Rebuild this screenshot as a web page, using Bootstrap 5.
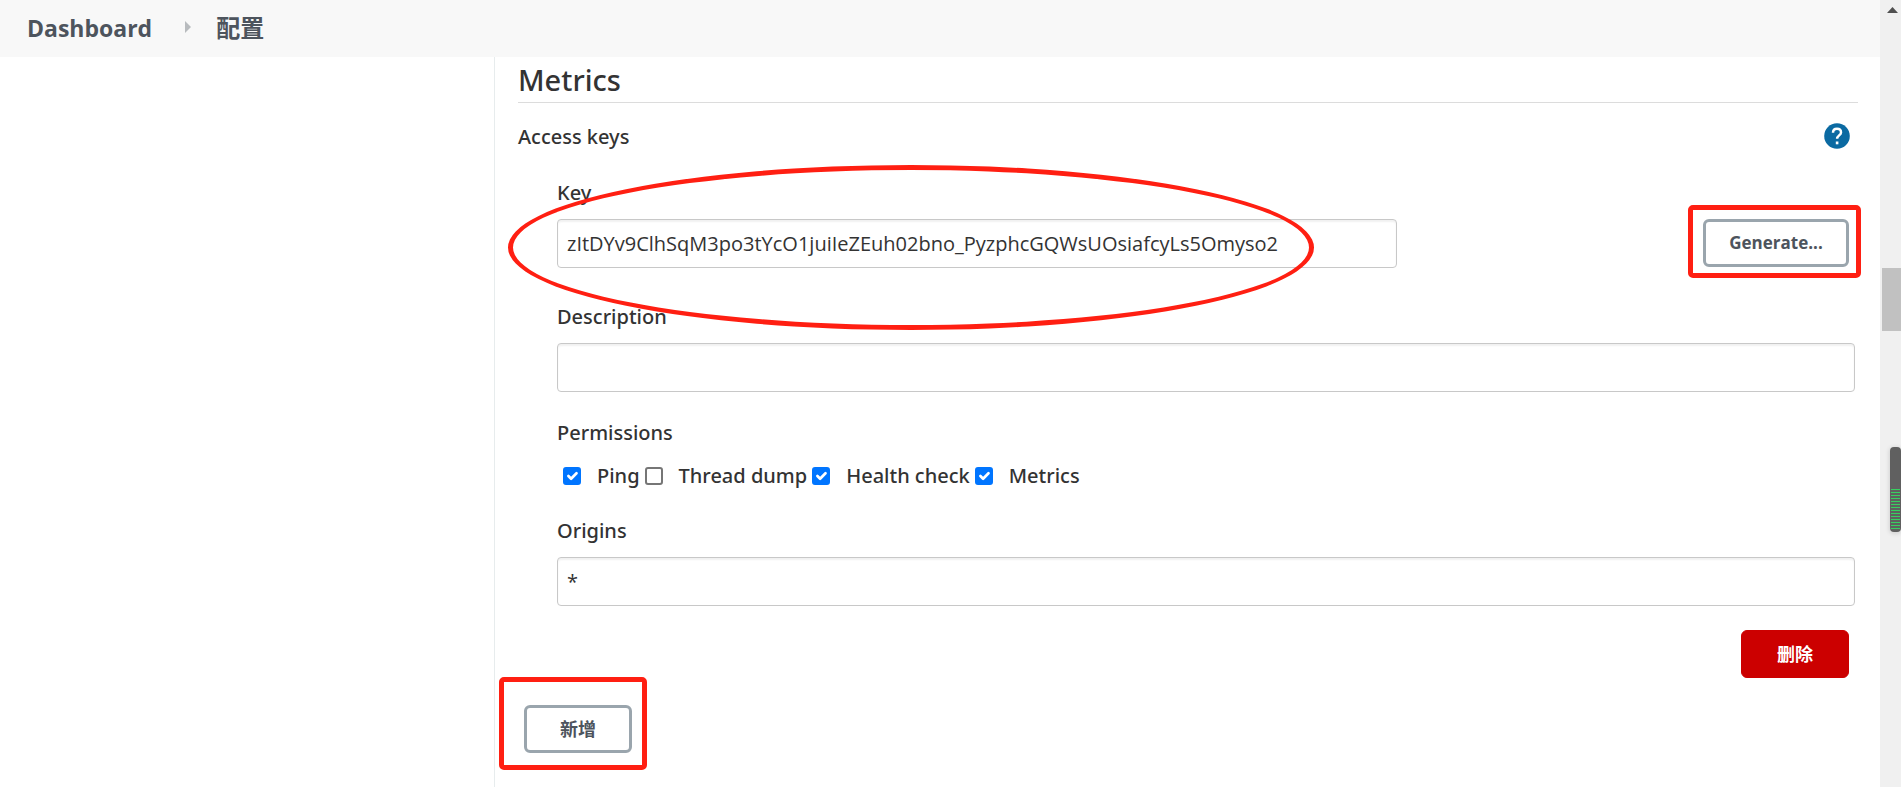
<!DOCTYPE html>
<html lang="zh-CN">
<head>
<meta charset="utf-8">
<meta name="viewport" content="width=device-width, initial-scale=1">
<title>配置 - Dashboard</title>
<link href="https://cdn.jsdelivr.net/npm/bootstrap@5.3.0/dist/css/bootstrap.min.css" rel="stylesheet">
<style>
  body { font-family: "Open Sans", "Noto Sans CJK SC", sans-serif; font-size: 20px; line-height: 28px; color: #333; }
  .page-col, .config-col { min-width: 0; }
  .topbar { height: 57px; background: #f8f8f8; padding: 0 27px 2px; font-size: 23px; font-weight: 700; }
  .topbar a, .topbar a:hover { color: #4d545d; text-decoration: none; }
  .topbar svg { margin: 0 24px 2px 32px; }
  .topbar .crumb-here { font-size: 24px; }
  .side-col { width: 495px; border-right: 1px solid #e7eced; }
  .config-col { padding: 5px 22px 32px 23px; }
  .section-title, .form-label, .form-check-label, .group-title { font-family: "Noto Sans", "Noto Sans CJK SC", sans-serif; font-weight: 500; color: #333; }
  .section-title { font-size: 29px; line-height: 36px; border-bottom: 1px solid #dcdcdc; padding-bottom: 4px; margin-bottom: 20px; }
  .form-label, .form-check-label, .group-title { font-size: 20px; line-height: 28px; }
  .help-btn { width: 26px; height: 26px; margin: 0 8px 2px 0; }
  .entry-body { padding: 28px 3px 0 39px; }
  .entry-body .form-label { margin-bottom: 12px; }
  .entry-body legend.form-label { margin-bottom: 15px; float: none; }
  .field-block { margin-bottom: 27px; }
  .key-block { margin-bottom: 35px; }
  .form-control { height: 49px; padding: 0 9px; font-size: 20px; color: #333; border: 1px solid #c8c8c8; border-radius: 4px; box-shadow: inset 0 2px 2px rgba(0,0,0,.06); }
  .key-field { width: 840px; }
  .perm-row { gap: 5px; padding-left: 6px; }
  .perm-row .form-check { gap: 16px; min-height: 28px; }
  .perm-row .form-check-input { width: 18px; height: 18px; border: 2px solid #767676; border-radius: 3px; }
  .perm-row .form-check-input:checked { background-color: #0075ff; border-color: #0075ff; background-size: 18px 18px; }
  .btn { height: 48px; width: 108px; padding: 0; font-size: 18px; font-weight: 700; border-radius: 6px; }
  .btn-plain, .btn-plain:hover { background: #fff; border: 3px solid #9aa5ad; color: #4d545d; }
  .btn-generate { width: 146px; font-size: 17px; }
  .btn-remove, .btn-remove:hover { background: #c00; border-color: #c00; color: #fff; }
  .action-end { margin-right: 6px; }
  .add-row { margin: 27px 0 0 6px; }
  .red-box { border: 5px solid #ff1f12; border-radius: 5px; pointer-events: none; }
  .box-generate { inset: -14px -12px -10px -15px; }
  .box-add { inset: -28px -15px -17px -25px; }
  .oval-key { border: 5px solid #ff1f12; border-radius: 50%; left: -49px; top: -54px; width: 806px; height: 165px; pointer-events: none; z-index: 1; }
  .rail { width: 21px; background: #f0f0f0; }
  .rail-arrow { right: 3px; top: 7px; }
  .rail-thumb { left: 2px; right: 0; top: 268px; height: 63px; background: #c1c1c1; }
  .meter { right: 0; top: 447px; width: 11px; height: 85px; border-radius: 4px; background: #606060; box-shadow: 0 1px 4px 1px rgba(0,0,0,.12); padding: 42px 1px 2px; }
  .meter-lines { height: 100%; background: repeating-linear-gradient(#36d05f 0 1px, #606060 1px 3px); }
</style>
</head>
<body>
<div class="d-flex min-vh-100">
  <div class="page-col flex-grow-1 d-flex flex-column">
    <nav class="topbar d-flex align-items-center" aria-label="breadcrumb">
      <a href="#">Dashboard</a>
      <svg width="8" height="12" viewBox="0 0 8 12" aria-hidden="true"><path d="M1 0L7 6L1 12Z" fill="#b8bbbe"/></svg>
      <a class="crumb-here" href="#">配置</a>
    </nav>
    <div class="flex-grow-1 d-flex">
      <aside class="side-col flex-shrink-0"></aside>
      <main class="config-col flex-grow-1">
        <h2 class="section-title">Metrics</h2>
        <div class="d-flex align-items-center justify-content-between">
          <span class="group-title">Access keys</span>
          <a href="#" class="help-btn d-flex" aria-label="Help">
            <svg width="26" height="26" viewBox="0 0 26 26"><circle cx="13" cy="13" r="12.8" fill="#0b6aa2"/><path d="M9 9.7C9 7.2 10.600 5.800 13 5.800S17 7.300 17 9.400C17 12.300 13.100 12.500 13.100 15.800" fill="none" stroke="#fff" stroke-width="2.500"/><rect x="11.800" y="18.500" width="2.600" height="2.800" fill="#fff"/></svg>
          </a>
        </div>
        <form class="entry-body">
          <div class="key-block">
            <label class="form-label d-block" for="key">Key</label>
            <div class="d-flex justify-content-between position-relative">
              <input class="form-control key-field" id="key" type="text" value="zItDYv9ClhSqM3po3tYcO1juiIeZEuh02bno_PyzphcGQWsUOsiafcyLs5Omyso2">
              <div class="oval-key position-absolute"></div>
              <div class="action-end position-relative flex-shrink-0">
                <button class="btn btn-plain btn-generate" type="button">Generate...</button>
                <div class="red-box box-generate position-absolute"></div>
              </div>
            </div>
          </div>
          <div class="field-block">
            <label class="form-label d-block" for="description">Description</label>
            <input class="form-control" id="description" type="text">
          </div>
          <fieldset class="field-block">
            <legend class="form-label">Permissions</legend>
            <div class="perm-row d-flex">
              <div class="form-check d-flex align-items-center p-0 m-0"><input class="form-check-input m-0" type="checkbox" id="ping" checked><label class="form-check-label" for="ping">Ping</label></div>
              <div class="form-check d-flex align-items-center p-0 m-0"><input class="form-check-input m-0" type="checkbox" id="dump"><label class="form-check-label" for="dump">Thread dump</label></div>
              <div class="form-check d-flex align-items-center p-0 m-0"><input class="form-check-input m-0" type="checkbox" id="health" checked><label class="form-check-label" for="health">Health check</label></div>
              <div class="form-check d-flex align-items-center p-0 m-0"><input class="form-check-input m-0" type="checkbox" id="metrics" checked><label class="form-check-label" for="metrics">Metrics</label></div>
            </div>
          </fieldset>
          <div class="mb-4">
            <label class="form-label d-block" for="origins">Origins</label>
            <input class="form-control" id="origins" type="text" value="*">
          </div>
          <div class="action-end d-flex justify-content-end"><button class="btn btn-remove" type="button">删除</button></div>
        </form>
        <div class="d-flex">
          <div class="add-row position-relative">
            <button class="btn btn-plain d-block" type="button">新增</button>
            <div class="red-box box-add position-absolute"></div>
          </div>
        </div>
      </main>
    </div>
  </div>
  <div class="rail position-relative flex-shrink-0">
    <svg class="rail-arrow position-absolute" width="11" height="6" viewBox="0 0 11 6" aria-hidden="true"><path d="M5.500 0L11 6H0Z" fill="#505050"/></svg>
    <div class="rail-thumb position-absolute"></div>
    <div class="meter position-absolute"><div class="meter-lines"></div></div>
  </div>
</div>
<script src="https://cdn.jsdelivr.net/npm/bootstrap@5.3.0/dist/js/bootstrap.bundle.min.js"></script>
</body>
</html>
